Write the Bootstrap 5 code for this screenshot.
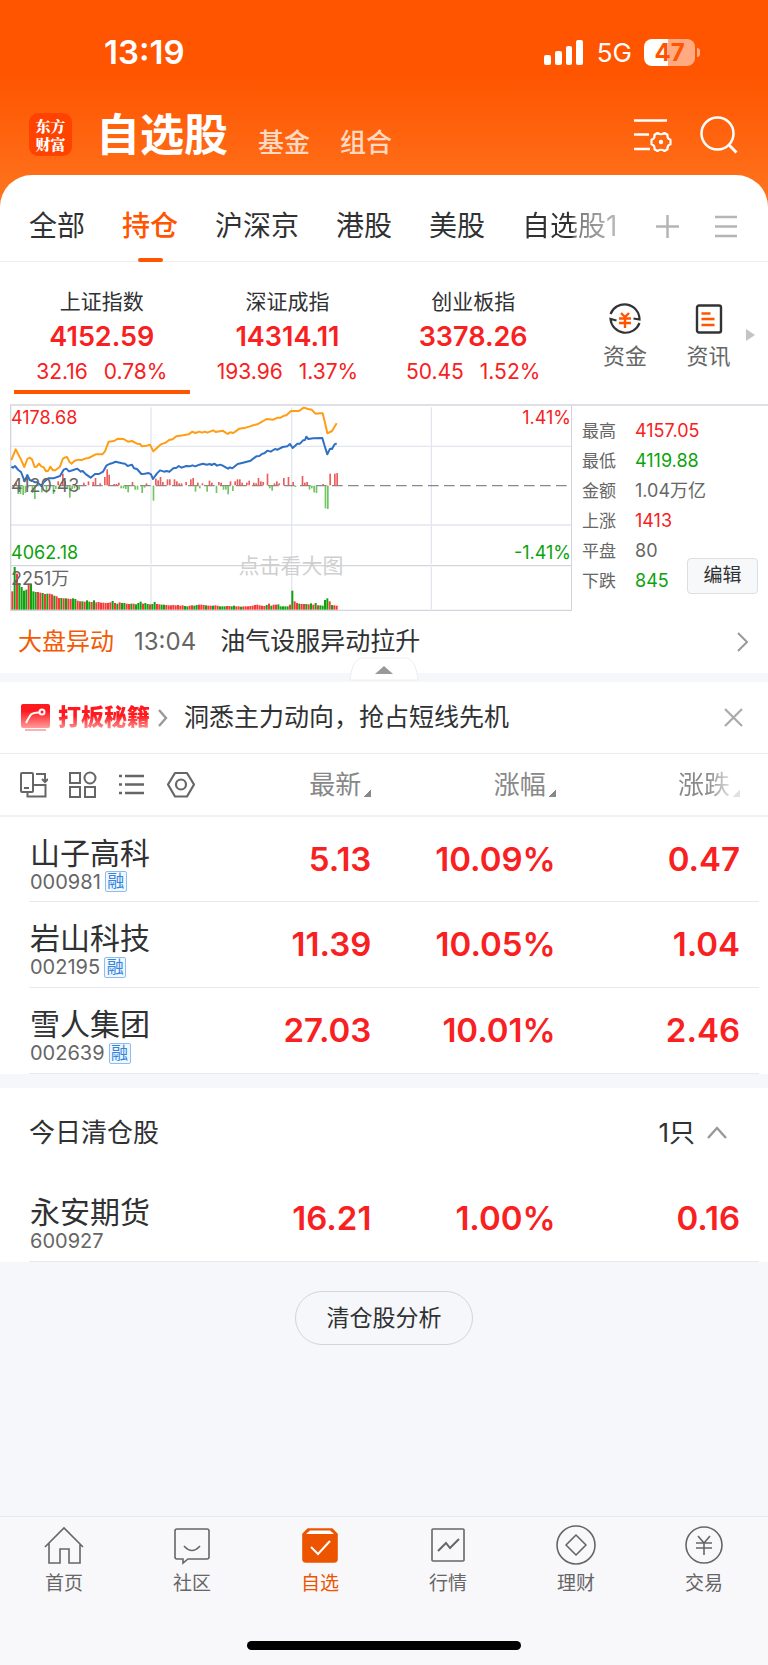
<!DOCTYPE html>
<html lang="zh-CN">
<head>
<meta charset="utf-8">
<meta name="viewport" content="width=device-width, initial-scale=1">
<title>自选股</title>
<link href="https://cdn.jsdelivr.net/npm/bootstrap@5.3.0/dist/css/bootstrap.min.css" rel="stylesheet">
<style>
  :root { --brand: #ff5500; --up: #f82020; --down: #0ba30b; --ink: #303133; --mute: #666; --line: #ececee; --band: #f6f7fa; }
  body { font-family: Inter, "Noto Sans CJK SC", sans-serif; color: var(--ink); background: var(--band); }
  a { color: inherit; text-decoration: none; }
  button { border: 0; background: none; padding: 0; color: inherit; }
  svg { display: block; flex-shrink: 0; }
  .page { background: linear-gradient(#f50 0, #f50 75px, #ff6d18 175px, #ff7a22 215px) no-repeat 0 0 / 100% 215px; }
  .up { color: var(--up); } .down { color: var(--down); } .mute { color: var(--mute); }
  .ln { fill: none; stroke: currentColor; }

  .status-bar { height: 100px; padding: 5px 68px 0 104px; }
  .clock { font-size: 33px; font-weight: 600; }
  .net { font-size: 26px; margin: 0 12px 0 14px; }
  .battery { width: 51px; height: 27px; border-radius: 8px; font-size: 24px; font-weight: 700; line-height: 27px; color: var(--brand);
    background: linear-gradient(90deg, #fff 47%, #ffaa80 47%); }
  .battery-tip { width: 3px; height: 9px; margin-left: 2px; border-radius: 0 4px 4px 0; background: #ffaa80; }

  .app-bar { height: 75px; padding: 0 30px 6px 29px; }
  .logo { width: 43px; height: 43px; border-radius: 9px; background: #ff4200; font: 900 15px/18px "Noto Serif CJK SC", "Noto Sans CJK SC", serif; }
  .app-title { font-size: 44px; font-weight: 600; line-height: 60px; }
  .app-tab { font-size: 26px; font-weight: 500; line-height: 36px; margin-left: 30px; color: #ffd9c2; }

  .panel { border-radius: 32px 32px 0 0; }
  .tabs { height: 87px; padding: 16px 31px 0 29px; font-size: 28px; border-bottom: 1px solid var(--line); }
  .tabs .list { gap: 37px; }
  .tabs a { line-height: 69px; }
  .tabs .on { color: var(--brand); font-weight: 500; }
  .tabs .on::after { content: ""; position: absolute; left: 16px; right: 15px; bottom: -1px; height: 4px; background: var(--brand); border-radius: 2px; }
  .tools { color: #b5b5b5; }
  .fade-text { background: linear-gradient(90deg, #303133 52%, #777 56%, #bbb); -webkit-background-clip: text; background-clip: text; color: transparent; }

  .indices { padding: 26px 0 10px 9px; }
  .idx-name { font-size: 21px; line-height: 28px; }
  .idx-val { font-size: 27px; font-weight: 600; line-height: 42px; }
  .idx-sub { font-size: 21px; line-height: 28px; gap: 16px; }
  .idx-bar { height: 4px; margin: 4px 5px 0; background: var(--brand); }
  .shortcuts { width: 202px; padding: 14px 13px 0 37px; font-size: 22px; line-height: 32px; color: var(--mute); }

  .board { margin-left: 10px; border-top: 2px solid #dfdfe6; }
  .chart { height: 205px; font-size: 18px; line-height: 22px; }
  .chart svg { width: 100%; height: 100%; }
  .chart span { position: absolute; left: 1px; }
  .chart .at-right { left: auto; right: 1px; }
  .chart .row-top { top: 1px; } .chart .row-mid { top: 69px; } .chart .row-low { top: 136px; } .chart .row-vol { top: 162px; }
  .chart .hint { left: 0; top: 149px; font-size: 21px; color: #cfcfcf; }
  .figures { width: 196px; padding: 10px 0 0 10px; font-size: 18px; line-height: 30px; }
  .figures dt { width: 53px; font-size: 17px; font-weight: 400; }
  .edit-btn { right: 10px; bottom: 17px; width: 71px; height: 36px; font-size: 19px; background: #f7f8fa; border: 1px solid #dddee3; border-radius: 4px; }

  .news { height: 62px; padding: 0 19px 0 18px; font-size: 24px; }
  .news-tag { color: #f35a05; }
  .news-title { font-size: 25px; }
  .band { background: var(--band); height: 9px; }
  .handle { bottom: 0; left: 50%; margin-left: -35px; }
  .promo { height: 72px; padding: 0 24px 0 21px; font-size: 25px; border-bottom: 1px solid var(--line); }
  .promo-name { font-size: 23px; font-weight: 900; background: linear-gradient(#ff1a1f 45%, #ff9a9a 85%); -webkit-background-clip: text; background-clip: text; color: transparent; }

  .quotes { table-layout: fixed; }
  .quotes th, .quotes td { padding: 0 28px 0 0; text-align: right; vertical-align: middle; }
  .quotes th:first-child, .quotes td:first-child { width: 28%; text-align: left; padding: 8px 0 0 30px; }
  .quotes thead tr { height: 62px; border-bottom: 2px solid #f1f1f3; }
  .quotes thead th { font-size: 26px; font-weight: 400; color: #888; }
  .quotes thead th:first-child { padding: 0 0 0 19px; color: #666; }
  .quotes tbody tr { height: 86px; background: linear-gradient(#e9e9eb, #e9e9eb) no-repeat 29px 100% / calc(100% - 38px) 1px; }
  .quotes tbody td { font-size: 33px; font-weight: 600; color: var(--up); }
  .quotes .stock { font-size: 30px; font-weight: 400; line-height: 36px; color: var(--ink); }
  .quotes .code { font-size: 20px; font-weight: 400; line-height: 22px; color: var(--mute); }
  .tag { width: 22px; height: 21px; font-size: 17px; line-height: 19px; color: #3284dc; border: 1px solid #8dbdf0; border-radius: 2px; background: #f0f7ff; }
  .corner { display: inline-block; width: 8px; height: 7px; margin-left: 2px; vertical-align: -3px; background: linear-gradient(135deg, transparent 50%, #888 50%); }
  .fade-col { background: linear-gradient(90deg, #888 55%, #ddd); -webkit-background-clip: text; background-clip: text; color: transparent; }
  .fade-col + .corner { opacity: .25; }
  .sold-block { margin-top: 14px; }
  .sold { height: 88px; padding: 0 40px 0 29px; font-size: 26px; }
  .analyze { width: 178px; height: 54px; margin-top: 29px; border: 1px solid #d5d5d9; border-radius: 27px; font-size: 23px; }

  .bottom-nav { height: 149px; border-top: 1px solid #e9e9ec; background: #f8f8fb; color: var(--mute); font-size: 19px; }
  .bottom-nav a { padding-top: 8px; line-height: 37px; }
  .bottom-nav .on { color: #ec5400; }
  .home-bar { width: 274px; height: 9px; margin-bottom: 15px; background: #000; }
</style>
</head>
<body>
<div class="page d-flex flex-column min-vh-100">
  <header class="text-white">
    <div class="status-bar d-flex align-items-center justify-content-between">
      <span class="clock">13:19</span>
      <div class="d-flex align-items-center">
        <svg width="39" height="25" fill="#fff" aria-hidden="true"><rect y="15" width="7" height="10" rx="2"/><rect x="11" y="11" width="7" height="14" rx="2"/><rect x="22" y="6" width="6" height="19" rx="2"/><rect x="32" width="7" height="25" rx="2"/></svg>
        <span class="net">5G</span>
        <span class="battery text-center">47</span><span class="battery-tip"></span>
      </div>
    </div>
    <div class="app-bar d-flex align-items-center">
      <span class="logo d-flex align-items-center justify-content-center text-center me-4">东方<br>财富</span>
      <h1 class="app-title mb-0">自选股</h1>
      <a href="#" class="app-tab mt-3">基金</a>
      <a href="#" class="app-tab mt-3">组合</a>
      <button class="ms-auto" aria-label="列表设置"><svg class="ln" width="38" height="34" stroke-width="2.6"><path d="M0 2.500h33M0 16.500h15M0 31h16"/><path stroke-width="2.200" d="M23.500 15q3.500 2.500 7 0l3 1.800q-.5 4 3 5v4.400q-3.500 1-3 5l-3 1.800q-3.500-2.500-7 0l-3-1.800q.5-4-3-5v-4.400q3.500-1 3-5z" stroke-linejoin="round"/><circle cx="27" cy="24" r="2.200" fill="#fff" stroke="none"/></svg></button>
      <button class="ms-4 ps-1" aria-label="搜索"><svg class="ln" width="38" height="38" stroke-width="2.500"><circle cx="17.500" cy="17.500" r="16"/><path d="M28.500 28.500l8 8" stroke-width="3"/></svg></button>
    </div>
  </header>

  <main class="flex-grow-1">
    <div class="panel bg-white">
      <nav class="tabs d-flex align-items-center justify-content-between">
        <div class="list d-flex text-nowrap">
          <a href="#">全部</a><a href="#" class="on position-relative">持仓</a><a href="#">沪深京</a><a href="#">港股</a><a href="#">美股</a><a href="#" class="fade-text">自选股1</a>
        </div>
        <div class="tools d-flex">
          <button aria-label="添加"><svg class="ln" width="23" height="23" stroke-width="2.500"><path d="M0 11.500h23M11.500 0v23"/></svg></button>
          <button class="ms-4 ps-2" aria-label="菜单"><svg class="ln ms-1" width="22" height="23" stroke-width="2.500"><path d="M0 2h22M0 11.500h22M0 21h22"/></svg></button>
        </div>
      </nav>

      <section class="indices d-flex">
        <div class="d-flex flex-fill text-center">
          <a href="#" class="col-4"><div class="idx-name">上证指数</div><div class="idx-val up">4152.59</div><div class="idx-sub up d-flex justify-content-center"><span>32.16</span><span>0.78%</span></div><div class="idx-bar"></div></a>
          <a href="#" class="col-4"><div class="idx-name">深证成指</div><div class="idx-val up">14314.11</div><div class="idx-sub up d-flex justify-content-center"><span>193.96</span><span>1.37%</span></div></a>
          <a href="#" class="col-4"><div class="idx-name">创业板指</div><div class="idx-val up">3378.26</div><div class="idx-sub up d-flex justify-content-center"><span>50.45</span><span>1.52%</span></div></a>
        </div>
        <div class="shortcuts d-flex justify-content-between align-items-start">
          <a href="#" class="d-flex flex-column align-items-center"><svg class="ln mb-1" width="32" height="34" color="#333" stroke-width="2.200"><path d="M1.500 12A15 15 0 0 1 30.500 17.500L24.500 16.500M30.500 21A15 15 0 0 1 1.500 17L7.500 18.500"/><path stroke="#ff5500" stroke-width="2.400" d="M12 11l4 4 4-4M10 16.500h12M10 21h12M16 15v11"/></svg>资金</a>
          <a href="#" class="d-flex flex-column align-items-center ms-3 ps-2"><svg class="ln mb-1" width="28" height="34" color="#333" stroke-width="2.400"><rect x="2" y="3.500" width="24" height="27" rx="2"/><path stroke="#ff5500" d="M6.500 11.500h9M6.500 17h13M6.500 23h13"/></svg>资讯</a>
          <svg class="mt-4" width="9" height="28"><path d="M0 3v12l9-6z" fill="#c4c4c8"/></svg>
        </div>
      </section>

      <section class="board d-flex">
        <div class="chart position-relative flex-fill">
          <svg viewBox="0 0 562 205" preserveAspectRatio="none" aria-label="上证指数分时图">
            <g transform="translate(-10 -11) scale(.333333)" fill="none">
              <path stroke="#e3e6ef" stroke-width="4" d="M30 154H1715M30 390H1715M453 37V507M453 516V643M875 37V507M875 516V643M1294 37V507M1294 516V643"/>
              <path stroke="#d3d5dc" stroke-width="4" d="M32 33V646H1715V33M32 512H1715"/>
              <path stroke="#888" stroke-width="4" stroke-dasharray="32 16" d="M36 272H1710"/>
              <g id="flow"></g><g id="volume"></g>
              <path stroke="#ff9d14" stroke-width="6" stroke-linejoin="round" d="M34 195L47 163 60 188 73 216 82 192 89 188 96 193 104 216 110 215 117 206 124 214 131 217 138 229 145 227 151 215 159 226 166 226 180 215 188 192 193 188 201 186 208 200 215 206 223 198 235 194 245 195 258 190 266 189 287 178 307 178 315 169 326 140 342 138 354 131 371 132 384 140 396 138 411 146 420 147 426 154 440 152 450 149 460 169 483 148 497 143 507 135 518 133 529 124 549 121 566 118 577 110 586 114 598 110 606 113 615 110 622 113 640 106 647 111 668 107 683 117 690 112 700 114 718 101 737 98 750 94 762 90 772 88 800 72 820 74 833 68 842 68 850 63 860 60 873 48 897 48 911 38 924 42 935 44 946 56 960 55 968 55 975 83 982 115 996 108 1010 85"/>
              <path stroke="#2e70c4" stroke-width="6" stroke-linejoin="round" d="M34 215L39 218 45 213 54 224 63 231 74 259 82 240 89 255 98 258 105 262 112 262 124 273 131 262 145 250 160 250 180 243 191 224 199 221 207 229 220 225 232 221 243 230 248 228 258 238 272 248 285 237 297 237 309 230 319 212 328 207 338 204 347 200 366 205 375 206 383 213 396 209 402 220 411 222 424 237 434 236 446 234 453 238 459 252 471 235 480 226 492 230 500 228 508 230 520 220 530 218 536 213 545 218 559 213 569 214 577 211 586 214 598 209 609 206 620 209 629 207 635 210 643 206 651 212 661 209 668 212 684 221 690 217 697 220 713 207 729 203 752 197 769 184 778 183 787 176 793 175 802 167 812 170 825 162 833 164 848 156 862 154 870 147 878 159 892 146 900 146 909 136 915 135 919 125 925 132 940 130 967 129 974 153 982 178 990 161 996 162 1003 149 1010 145"/>
            </g>
          </svg>
          <span class="up row-top">4178.68</span>
          <span class="mute row-mid">4120.43</span>
          <span class="down row-low">4062.18</span>
          <span class="mute row-vol">2251万</span>
          <span class="up row-top at-right">1.41%</span>
          <span class="down row-low at-right">-1.41%</span>
          <span class="hint w-100 text-center">点击看大图</span>
        </div>
        <div class="figures position-relative">
          <dl class="mb-0 mute">
            <div class="d-flex"><dt>最高</dt><dd class="mb-0 up">4157.05</dd></div>
            <div class="d-flex"><dt>最低</dt><dd class="mb-0 down">4119.88</dd></div>
            <div class="d-flex"><dt>金额</dt><dd class="mb-0">1.04万亿</dd></div>
            <div class="d-flex"><dt>上涨</dt><dd class="mb-0 up">1413</dd></div>
            <div class="d-flex"><dt>平盘</dt><dd class="mb-0">80</dd></div>
            <div class="d-flex"><dt>下跌</dt><dd class="mb-0 down">845</dd></div>
          </dl>
          <button class="edit-btn position-absolute">编辑</button>
        </div>
      </section>

      <a href="#" class="news d-flex align-items-center">
        <span class="news-tag">大盘异动</span><span class="mute ms-3 ps-1">13:04</span><span class="news-title ms-4">油气设服异动拉升</span>
        <svg class="ln ms-auto" width="12" height="20" color="#999" stroke-width="2"><path d="M1 1l9 9-9 9"/></svg>
      </a>
    </div>
    <div class="band position-relative">
      <button class="handle position-absolute" aria-label="收起"><svg width="70" height="25"><path d="M1 23Q3 2 13 1H57Q67 2 69 23z" fill="#fff" stroke="#eeeef1"/><path d="M26 17l9-8 9 8z" fill="#999"/></svg></button>
    </div>

    <section class="bg-white">
      <div class="promo d-flex align-items-center">
        <svg width="29" height="28"><defs><linearGradient id="red" x2="0" y2="1"><stop offset=".3" stop-color="#ff1a1f"/><stop offset="1" stop-color="#ff9c9c"/></linearGradient></defs><rect width="29" height="24" rx="2" fill="url(#red)"/><path d="M4 25h21v2H4z" fill="#ffb0b0"/><g fill="none" stroke="#fff" stroke-width="2"><path d="M5 19C10 9 10 9 18 8.500"/><circle cx="21" cy="8" r="2.500"/></g></svg>
        <span class="promo-name ms-2">打板秘籍</span>
        <svg class="ln ms-2" width="10" height="18" color="#999" stroke-width="2.400"><path d="M1 1l7 8-7 8"/></svg>
        <span class="ms-3">洞悉主力动向，抢占短线先机</span>
        <button class="ms-auto" aria-label="关闭"><svg class="ln" width="20" height="20" color="#aaa" stroke-width="2.200"><path d="M1 1l17 17M18 1L1 18"/></svg></button>
      </div>

      <table class="quotes w-100">
        <thead><tr>
          <th><div class="d-flex">
            <button aria-label="布局"><svg class="ln me-3" width="29" height="28" stroke-width="2"><rect x="2" y="2" width="12" height="19" rx="1"/><path d="M5 17h5M17 3h9v8M23 8l3 3 3-3M17 14h9.500v11.500H8.500V22M14 14h5"/></svg></button>
            <button class="ms-1" aria-label="宫格"><svg class="ln me-3" width="29" height="28" stroke-width="2"><path d="M2 2h10v10H2zM2 16h10v10H2zM17 16h10v10H17z"/><circle cx="22" cy="7" r="5.500"/></svg></button>
            <button class="ms-1" aria-label="列表"><svg class="ln me-3" width="29" height="28" stroke-width="2.400"><path d="M8 5h19M8 13.500h19M8 22h19M2 5h3M2 13.500h3M2 22h3"/></svg></button>
            <button class="ms-1" aria-label="设置"><svg class="ln" width="29" height="28" stroke-width="2.200" stroke-linejoin="round"><path d="M9 2h12l7 11.500-7 12H9L2 13.500z"/><circle cx="15" cy="13.500" r="5"/></svg></button>
          </div></th>
          <th>最新<i class="corner"></i></th><th>涨幅<i class="corner"></i></th><th><span class="fade-col">涨跌</span><i class="corner"></i></th>
        </tr></thead>
        <tbody>
          <tr><td><div class="stock">山子高科</div><div class="code d-flex align-items-center">000981<span class="tag text-center ms-1">融</span></div></td><td>5.13</td><td>10.09%</td><td>0.47</td></tr>
          <tr><td><div class="stock">岩山科技</div><div class="code d-flex align-items-center">002195<span class="tag text-center ms-1">融</span></div></td><td>11.39</td><td>10.05%</td><td>1.04</td></tr>
          <tr><td><div class="stock">雪人集团</div><div class="code d-flex align-items-center">002639<span class="tag text-center ms-1">融</span></div></td><td>27.03</td><td>10.01%</td><td>2.46</td></tr>
        </tbody>
      </table>
    </section>

    <section class="sold-block bg-white">
      <div class="sold d-flex align-items-center">
        <span>今日清仓股</span><span class="ms-auto">1只</span>
        <svg class="ln ms-2 ps-1" width="25" height="13" color="#999" stroke-width="2.400"><path d="M1 12l9-10 9 10"/></svg>
      </div>
      <table class="quotes w-100"><tbody>
        <tr><td><div class="stock">永安期货</div><div class="code">600927</div></td><td>16.21</td><td>1.00%</td><td>0.16</td></tr>
      </tbody></table>
    </section>
    <div class="text-center"><button class="analyze">清仓股分析</button></div>
  </main>

  <footer class="bottom-nav d-flex flex-column justify-content-between align-items-center">
    <nav class="d-flex w-100 text-center">
      <a href="#" class="col-2"><svg class="ln mx-auto" width="40" height="40" stroke-width="1.600"><path d="M1 22L20 3l19 19M5 18.500V38h11V24h9v14h11V18.500"/></svg>首页</a>
      <a href="#" class="col-2"><svg class="ln mx-auto" width="40" height="40" stroke-width="1.600"><path d="M5 4h30q2 0 2 2v26q0 2-2 2H16l-5 4v-4H5q-2 0-2-2V6q0-2 2-2zM12 21q8 9 16 0"/></svg>社区</a>
      <a href="#" class="col-2 on"><svg class="ln mx-auto" width="40" height="40" stroke-width="1.600"><path d="M3 9l5-5h24l5 5v25q0 3-3 3H6q-3 0-3-3z" fill="currentColor"/><path d="M6 9l4-3.500h20L34 9z" fill="#fff" stroke="none"/><path stroke="#fff" stroke-width="2" d="M11 22l7 7 12-13"/></svg>自选</a>
      <a href="#" class="col-2"><svg class="ln mx-auto" width="40" height="40" stroke-width="1.600"><rect x="4" y="4" width="32" height="32" rx="1"/><path stroke-width="2" d="M10 26l8-8 4 5 9-9"/></svg>行情</a>
      <a href="#" class="col-2"><svg class="ln mx-auto" width="40" height="40" stroke-width="1.600"><circle cx="20" cy="20" r="19"/><path stroke-linejoin="round" d="M20 10l10 10-10 10-10-10z"/></svg>理财</a>
      <a href="#" class="col-2"><svg class="ln mx-auto" width="40" height="40" stroke-width="1.600"><circle cx="20" cy="20" r="18"/><path d="M14 11l6 7 6-7M12 18h16M12 23h16M20 18v12"/></svg>交易</a>
    </nav>
    <div class="home-bar rounded-pill"></div>
  </footer>
</div>
<script src="https://cdn.jsdelivr.net/npm/bootstrap@5.3.0/dist/js/bootstrap.bundle.min.js"></script>
<script>
  // Minute bars: [x, height]; positive values are net inflow (up), negative net outflow (down).
  const flow = [[49,8],[55,-25],[62,-25],[70,-28],[77,-22],[84,-6],[98,-22],[105,-40],[126,-20],[140,-22],[161,-25],[168,-10],[175,12],[189,35],[196,12],[203,-10],[210,-36],[217,-10],[224,-8],[238,-12],[252,8],[266,12],[280,10],[287,22],[301,6],[315,25],[322,48],[328,32],[343,4],[350,4],[357,8],[364,-8],[371,-8],[378,-10],[385,-20],[398,10],[406,-12],[413,-12],[427,-22],[434,-6],[440,6],[461,-45],[468,20],[475,15],[482,25],[489,10],[503,18],[510,18],[524,18],[531,12],[538,6],[545,6],[559,10],[573,18],[580,22],[587,-18],[594,8],[600,-8],[608,6],[622,-18],[629,14],[636,8],[650,-22],[657,10],[664,8],[671,-12],[678,-12],[685,-26],[692,12],[699,-16],[706,12],[713,18],[720,18],[727,8],[741,8],[748,14],[762,8],[769,6],[776,22],[783,12],[790,10],[803,35],[810,-8],[817,-15],[824,6],[831,12],[838,6],[852,22],[866,25],[880,10],[887,-4],[908,28],[915,8],[922,10],[929,-12],[936,-8],[943,-20],[950,-22],[970,4],[977,-68],[984,-70],[991,35],[1005,35],[1012,37]];
  const volume = [55,128,108,80,68,57,60,78,78,55,53,53,51,50,47,48,48,46,42,40,35,35,34,34,33,32,34,32,27,25,25,24,28,24,23,28,22,23,21,21,20,20,22,26,20,18,22,20,20,18,17,18,18,16,20,24,18,20,17,16,17,23,17,16,15,15,14,13,13,14,13,14,12,13,11,10,12,13,12,14,15,15,14,13,12,12,12,13,12,10,10,10,11,11,10,12,10,10,9,10,10,10,11,12,14,15,13,12,11,14,18,12,15,15,16,10,10,10,10,15,57,25,20,18,17,17,17,16,19,15,20,13,13,12,29,34,25,14,13,12];
  // One letter per volume bar, ten to a group: r for a rising minute, g for a falling one.
  const tone = ["rgrggggrgg", "grrgrgrrgr", "rgrgrrggrr", "grggrgrrrr", "rrrgrgrggr", "rgrgggrggr", "ggrrggrrrr", "rrrrggrrgg", "rrrgrrgrrg", "ggrrggrrgr", "rrrrrrrrrg", "rgrrgggggr", "grrgrrgrgr", "grggggrgrr"].join("");
  const bar = (x, y, w, h, c) => `<rect x="${x - 3}" y="${y}" width="${w}" height="${h}" fill="${c}"/>`;
  document.getElementById("flow").innerHTML = flow.map(([x, v]) => bar(x, v > 0 ? 271 - v : 272, 5, Math.abs(v), v > 0 ? "#ee5c5c" : "#71c562")).join("");
  document.getElementById("volume").innerHTML = volume.map((v, i) => bar(37 + i * 7, 644 - v, 6, v, tone[i] === "g" ? "#10a310" : "#f43a3a")).join("");
</script>
</body>
</html>
